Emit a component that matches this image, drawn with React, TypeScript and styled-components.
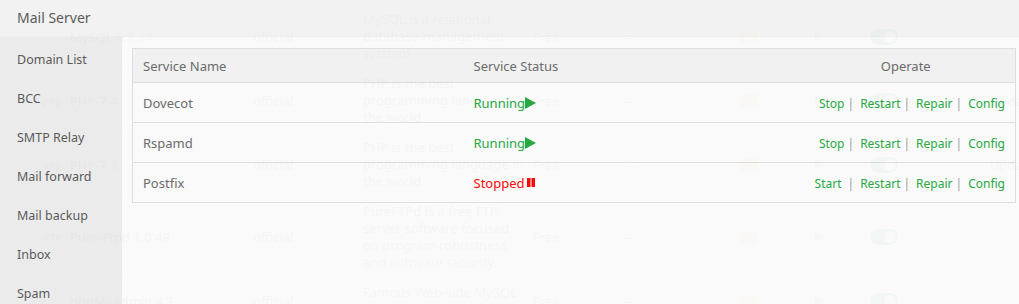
import styled, { createGlobalStyle } from "styled-components"

const GlobalStyle = createGlobalStyle`
  body {
    margin: 0;
    background: #fff;
    font-family: "Noto Sans", "Open Sans", sans-serif;
  }
`

const Page = styled.div`
  position: relative;
  width: 100%;
  height: 304px;
  overflow: hidden;
`

/* software list that sits behind the layer */
const SoftList = styled.div`
  padding-top: 5px;
  color: #666;
  font-size: 13px;
`

const SoftRow = styled.div`
  display: grid;
  grid-template-columns: 70px 183px 110px 170px 92px 115px 75px 55px 120px 1fr;
  align-items: center;
  padding: 6px 0;
  border-bottom: 1px solid #eee;
`

const SoftLogo = styled.div`
  justify-self: end;
  padding-right: 8px;
  font-size: 11px;
  font-style: italic;
  font-weight: bold;
  color: #8892bf;
`

const SoftDesc = styled.div`
  line-height: 17px;
`

const Folder = styled.div`
  width: 18px;
  height: 13px;
  border-radius: 2px;
  background: #f8d775;
`

const Toggle = styled.div`
  position: relative;
  width: 28px;
  height: 16px;
  border-radius: 8px;
  background: #20a53a;
  &::after {
    content: "";
    position: absolute;
    right: 2px;
    top: 2px;
    width: 12px;
    height: 12px;
    border-radius: 50%;
    background: #fff;
  }
`

/* mail server layer */
const Layer = styled.div`
  position: absolute;
  inset: 0;
  display: grid;
  grid-template-columns: 122px 1fr;
  grid-template-rows: 37px 1fr;
  opacity: 0.965;
`

const LayerTitle = styled.div`
  grid-column: 1 / -1;
  box-sizing: border-box;
  background: #f2f2f2;
  border-bottom: 1px solid #eee;
  padding-left: 17px;
  line-height: 35px;
  font-size: 14px;
  color: #555;
`

const Menu = styled.div`
  background: #ebebeb;
  padding-top: 3px;
`

const MenuItem = styled.div`
  height: 39px;
  line-height: 39px;
  padding-left: 17px;
  font-size: 12.5px;
  color: #555;
`

const Content = styled.div`
  background: #fafafa;
  padding: 11px 3px 0 10px;
`

const Table = styled.table`
  width: 100%;
  table-layout: fixed;
  border-collapse: collapse;
  border: 1px solid #ddd;
  font-size: 13px;
  color: #666;
`

const Th = styled.th<{ $align?: string }>`
  height: 33px;
  padding: 0 10px;
  background: #f1f1f1;
  font-weight: normal;
  text-align: ${(p) => p.$align || "left"};
  border-bottom: 1px solid #ddd;
`

const Td = styled.td<{ $align?: string }>`
  height: 39px;
  padding: 0 10px;
  text-align: ${(p) => p.$align || "left"};
  border-top: 1px solid #ddd;
  white-space: nowrap;
`

const Status = styled.span<{ $on: boolean }>`
  display: inline-flex;
  align-items: center;
  color: ${(p) => (p.$on ? "#20a53a" : "#ff0000")};
  svg {
    margin-left: ${(p) => (p.$on ? "0" : "2px")};
  }
`

const Op = styled.a<{ $wide?: boolean }>`
  font-size: 12px;
  color: #20a53a;
  text-decoration: none;
  cursor: pointer;
  margin-right: ${(p) => (p.$wide ? "3px" : "0")};
`

const Sep = styled.span`
  font-size: 12px;
  color: #999;
  margin: 0 6px 0 3px;
`

const PlayIcon = () => (
  <svg width="11" height="12" viewBox="0 0 11 12">
    <path d="M0 0L11 6L0 12Z" fill="#20a53a" />
  </svg>
)

const PauseIcon = () => (
  <svg width="9" height="9" viewBox="0 0 9 9">
    <rect x="0" y="0" width="3.5" height="9" fill="#ff0000" />
    <rect x="4.5" y="0" width="3.5" height="9" fill="#ff0000" />
  </svg>
)

const softs = [
  { logo: "", name: "MySQL 5.7.34", desc: ["MySQL is a relational", "database management", "system!"], update: false },
  { logo: "php", name: "PHP-7.4", desc: ["PHP is the best", "programming language in", "the world"], update: true },
  { logo: "php", name: "PHP-7.3", desc: ["PHP is the best", "programming language in", "the world"], update: true },
  { logo: "FTP", name: "Pure-Ftpd 1.0.49", desc: ["PureFTPd is a free FTP", "server software focused", "on program robustness", "and software security."], update: false },
  { logo: "", name: "phpMyAdmin 4.7", desc: ["Famous Web-side MySQL", "Management Tool"], update: false },
]

const menu = ["Domain List", "BCC", "SMTP Relay", "Mail forward", "Mail backup", "Inbox", "Spam"]

const services = [
  { name: "Dovecot", running: true },
  { name: "Rspamd", running: true },
  { name: "Postfix", running: false },
]

export default function App() {
  return (
    <Page>
      <GlobalStyle />
      <SoftList>
        {softs.map((s) => (
          <SoftRow key={s.name}>
            <SoftLogo>{s.logo}</SoftLogo>
            <div>{s.name}</div>
            <div>official</div>
            <SoftDesc>
              {s.desc.map((l) => (
                <div key={l}>{l}</div>
              ))}
            </SoftDesc>
            <div>Free</div>
            <div>--</div>
            <Folder />
            <svg width="10" height="12" viewBox="0 0 10 12">
              <path d="M0 0L10 6L0 12Z" fill="#aaa" />
            </svg>
            <Toggle />
            <div>{s.update ? "Update" : ""}</div>
          </SoftRow>
        ))}
      </SoftList>

      <Layer>
        <LayerTitle>Mail Server</LayerTitle>
        <Menu>
          {menu.map((m) => (
            <MenuItem key={m}>{m}</MenuItem>
          ))}
        </Menu>
        <Content>
          <Table>
            <colgroup>
              <col style={{ width: 331 }} />
              <col style={{ width: 333 }} />
              <col />
            </colgroup>
            <thead>
              <tr>
                <Th>Service Name</Th>
                <Th>Service Status</Th>
                <Th $align="center">Operate</Th>
              </tr>
            </thead>
            <tbody>
              {services.map((s) => (
                <tr key={s.name}>
                  <Td>{s.name}</Td>
                  <Td>
                    {s.running ? (
                      <Status $on>
                        Running
                        <PlayIcon />
                      </Status>
                    ) : (
                      <Status $on={false}>
                        Stopped
                        <PauseIcon />
                      </Status>
                    )}
                  </Td>
                  <Td $align="right">
                    <Op $wide={!s.running}>{s.running ? "Stop" : "Start"}</Op>
                    <Sep>|</Sep>
                    <Op>Restart</Op>
                    <Sep>|</Sep>
                    <Op>Repair</Op>
                    <Sep>|</Sep>
                    <Op>Config</Op>
                  </Td>
                </tr>
              ))}
            </tbody>
          </Table>
        </Content>
      </Layer>
    </Page>
  )
}
